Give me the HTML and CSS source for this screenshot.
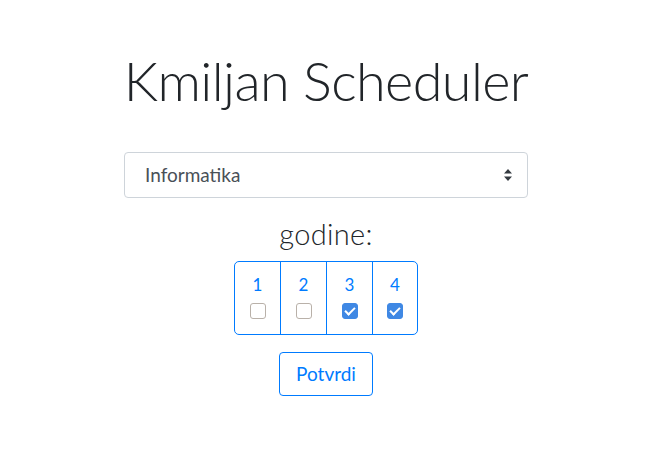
FILE: index.html
```html
<!DOCTYPE html>
<html lang="hr">
<head>
<meta charset="utf-8">
<title>Kmiljan Scheduler</title>
<link rel="stylesheet" href="styles.css">
</head>
<body>
<main class="page">
  <h1 class="title">Kmiljan Scheduler</h1>
  <div class="select">
    <span class="select-text">Informatika</span>
    <svg class="select-arrows" width="10" height="14" viewBox="0 0 10 14"><path d="M5 1 L9 5.5 H1 Z M1 8.5 H9 L5 13 Z" fill="#343a40"/></svg>
  </div>
  <h2 class="label">godine:</h2>
  <div class="years">
    <label class="year"><span class="num">1</span><input class="check" type="checkbox"></label>
    <label class="year"><span class="num">2</span><input class="check" type="checkbox"></label>
    <label class="year"><span class="num">3</span><input class="check" type="checkbox" checked></label>
    <label class="year"><span class="num">4</span><input class="check" type="checkbox" checked></label>
  </div>
  <button class="btn" type="button">Potvrdi</button>
</main>
</body>
</html>
```
FILE: styles.css
```css
* { box-sizing: border-box; }
body {
  margin: 0;
  background: #fff;
  font-family: "Lato", "Open Sans", sans-serif;
  color: #212529;
}
.page {
  display: flex;
  flex-direction: column;
  align-items: center;
  padding: 49px 11px 0 0;
}
.title {
  margin: 0;
  font-size: 54px;
  font-weight: 300;
  line-height: 1.2;
  letter-spacing: -0.6px;
}
.select {
  margin-top: 38px;
  width: 404px;
  height: 46px;
  border: 1px solid #ced4da;
  border-radius: 4px;
  display: flex;
  align-items: center;
  justify-content: space-between;
  padding: 0 14px 0 20px;
  font-size: 19px;
  color: #495057;
}
.select-arrows { display: block; }
.label {
  margin: 19px 0 0;
  font-size: 29px;
  font-weight: 300;
  line-height: 1.2;
  letter-spacing: 0.3px;
}
.years {
  margin-top: 9px;
  display: flex;
  border: 1px solid #007bff;
  border-radius: 5px;
  height: 74px;
}
.year {
  width: 46px;
  display: flex;
  flex-direction: column;
  align-items: center;
  padding-top: 13px;
  gap: 7px;
  border-left: 1px solid #007bff;
  color: #007bff;
  font-size: 17px;
  line-height: 20px;
}
.year:first-child { border-left: none; width: 45px; }
.year:last-child { width: 45px; }
.check {
  appearance: none;
  -webkit-appearance: none;
  margin: 1px 0 0;
  width: 16px;
  height: 16px;
  border: 1px solid #b9b1a9;
  border-radius: 3px;
  background: #fff;
  position: relative;
}
.check:checked {
  background: #3f88e4;
  border-color: #3f88e4;
}
.check:checked::after {
  content: "";
  position: absolute;
  left: 4px;
  top: 1.5px;
  width: 4px;
  height: 8px;
  border: solid #fff;
  border-width: 0 2.5px 2.5px 0;
  transform: rotate(45deg);
}
.btn {
  margin-top: 17px;
  height: 44px;
  padding: 0 16px;
  border: 1px solid #007bff;
  border-radius: 4px;
  background: #fff;
  color: #007bff;
  font-family: inherit;
  font-size: 19px;
}
```
